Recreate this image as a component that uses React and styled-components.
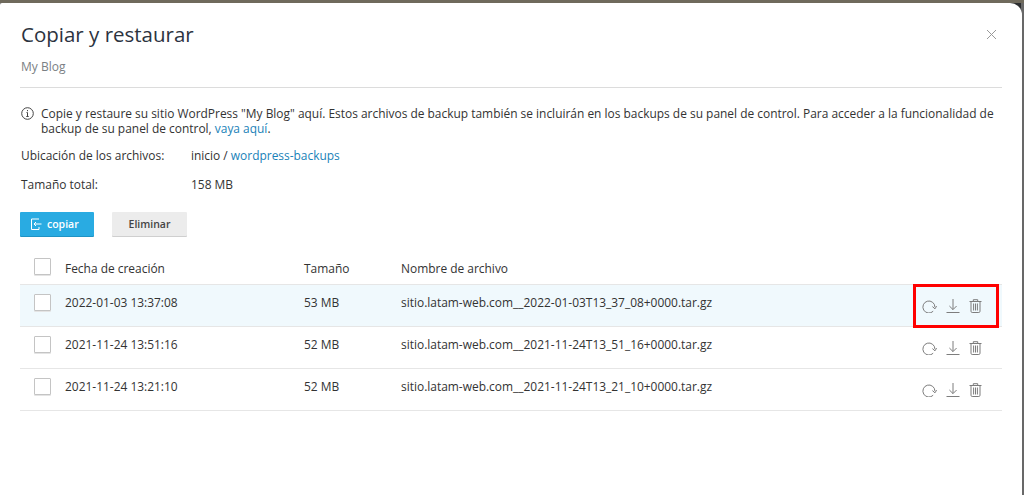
import React from "react";
import styled, { createGlobalStyle } from "styled-components";

const Global = createGlobalStyle`
  html, body { margin: 0; height: 100%; background: #666; overflow: hidden; }
  #root { height: 100%; }
  * { box-sizing: border-box; }
`;
const Backdrop = styled.div`
  height: 495px; padding: 3px 2.5px 0 0;
  background:
    linear-gradient(#2c2e30, #2c2e30) right 3px top 3px / 14px 14px no-repeat,
    linear-gradient(180deg, #6f6a5c 3px, #686868 3px);
`;
const Modal = styled.div`
  height: 492px; background: #fff; border-radius: 2px 12px 0 0;
  padding: 0 20px; font-family: "Open Sans", sans-serif; color: #333;
  font-size: 11.95px; position: relative;
`;
const Header = styled.header`
  height: 85px; padding-top: 17px; padding-left: 1px; border-bottom: 1px solid #dcdcdc;
`;
const Title = styled.h1`
  margin: 0; font-size: 20.5px; font-weight: 400; line-height: 28px; color: #2c3340;
`;
const Sub = styled.div`
  margin-top: 11px; font-size: 12px; line-height: 16px; color: #7b7f84;
`;
const Close = styled.button`
  position: absolute; top: 25px; right: 24px; width: 13px; height: 13px; padding: 0;
  border: 0; background: none; display: flex; color: #999;
`;
const Info = styled.div`
  display: flex; gap: 7px; margin-top: 18px; padding-left: 1px; line-height: 15px;
`;
const InfoIcon = styled.svg`
  flex: none; width: 13px; height: 13px; margin-top: 1px; color: #444;
`;
const Link = styled.a`
  color: #1a82b8; text-decoration: none;
`;
const Field = styled.div`
  display: grid; grid-template-columns: 170px 1fr; padding-left: 1px; line-height: 16px; margin-top: ${p => p.$gap}px;
`;
const Buttons = styled.div`
  display: flex; gap: 18px; margin-top: 19px;
`;
const Button = styled.button`
  height: 24px; border: 0; border-radius: 1px; display: flex; align-items: center; gap: 5px;
  justify-content: ${p => p.$primary ? "flex-start" : "center"};
  padding: 0 0 0 ${p => p.$primary ? 11 : 0}px;
  width: ${p => p.$w}px; font: 600 10.5px "Open Sans", sans-serif;
  background: ${p => p.$primary ? "#29abe2" : "#ececec"};
  color: ${p => p.$primary ? "#fff" : "#444"};
  box-shadow: 0 1px 0 ${p => p.$primary ? "#1f93c4" : "#cfcfcf"};
`;
const Table = styled.div`
  margin-top: 16px;
`;
const Row = styled.div`
  display: grid; grid-template-columns: 31px 239px 97px 1fr 89px; align-items: center; padding-left: 14px;
  height: ${p => p.$head ? 33 : 42}px;
  padding-bottom: ${p => p.$head ? 0 : 7}px;
  background: ${p => p.$active ? "#f0f9fd" : "#fff"};
  border-bottom: 1px solid #e6e6e6;
`;
const Check = styled.span`
  width: 17px; height: 17px; border: 1px solid #c4c4c4; border-radius: 1px; background: #fff;
  box-shadow: 0 1px 0 #e4e4e4; display: block; margin-top: ${p => p.$head ? -3 : 1}px;
`;
const Actions = styled.div`
  display: flex; align-items: flex-start; gap: 9px; align-self: stretch;
  margin: 0 3px -7px 0; padding: 14px 0 0 9px; color: #7d7d7d; position: relative;
`;
const Highlight = styled.div`
  position: absolute; inset: -1px 0 -2px 0; border: 3px solid #f00; pointer-events: none;
`;

const Refresh = () => (
  <svg width="15" height="14" viewBox="0 0 15 14" fill="none" stroke="currentColor" strokeWidth="1">
    <path d="M11.2 12.2A6 6 0 1 1 12.9 8" />
    <path d="M10.4 7.6l2.6 2.2 1.6-2.7" />
  </svg>
);
const Download = () => (
  <svg width="14" height="15" viewBox="0 0 14 15" fill="none" stroke="currentColor" strokeWidth="1">
    <path d="M7 0v10.5M3.4 7l3.6 3.6L10.6 7M.5 13.5h13" />
  </svg>
);
const Trash = () => (
  <svg width="13" height="14" viewBox="0 0 13 14" fill="none" stroke="currentColor" strokeWidth="1">
    <path d="M.5 2.5h12M4.3 2.5V.7h4.4v1.8M2 2.5v9.8c0 .8.5 1.2 1.2 1.2h6.6c.7 0 1.2-.4 1.2-1.2V2.5M4.6 4.5v7M6.5 4.5v7M8.4 4.5v7" />
  </svg>
);

const rows = [
  ["2022-01-03 13:37:08", "53 MB", "sitio.latam-web.com__2022-01-03T13_37_08+0000.tar.gz", true],
  ["2021-11-24 13:51:16", "52 MB", "sitio.latam-web.com__2021-11-24T13_51_16+0000.tar.gz", false],
  ["2021-11-24 13:21:10", "52 MB", "sitio.latam-web.com__2021-11-24T13_21_10+0000.tar.gz", false],
];

export default function App() {
  return (
    <>
      <Global />
      <Backdrop>
        <Modal>
          <Header>
            <Title>Copiar y restaurar</Title>
            <Sub>My Blog</Sub>
          </Header>
          <Close aria-label="Cerrar">
            <svg width="13" height="13" viewBox="0 0 13 13" stroke="currentColor" strokeWidth="1">
              <path d="M2 2l9 9M11 2l-9 9" />
            </svg>
          </Close>
          <Info>
            <InfoIcon viewBox="0 0 13 13" fill="none" stroke="currentColor">
              <circle cx="6.5" cy="6.5" r="5.8" />
              <path d="M6.5 5.5v4M5.3 9.5h2.4M5.5 5.5h1M6.5 3v1.2" />
            </InfoIcon>
            <div>
              Copie y restaure su sitio WordPress "My Blog" aquí. Estos archivos de backup también se incluirán en los backups de su panel de control. Para acceder a la funcionalidad de backup de su panel de control, <Link href="#">vaya aquí</Link>.
            </div>
          </Info>
          <Field $gap={12}>
            <span>Ubicación de los archivos:</span>
            <span>inicio / <Link href="#">wordpress-backups</Link></span>
          </Field>
          <Field $gap={13}>
            <span>Tamaño total:</span>
            <span>158 MB</span>
          </Field>
          <Buttons>
            <Button $primary $w={74}>
              <svg width="11" height="12" viewBox="0 0 11 12" fill="none" stroke="currentColor" strokeWidth="1">
                <path d="M8 1H.5v10.5H8V9M3 6h7.5M5 4L3 6l2 2" />
              </svg>
              copiar
            </Button>
            <Button $w={75}>Eliminar</Button>
          </Buttons>
          <Table>
            <Row $head>
              <Check $head />
              <span>Fecha de creación</span>
              <span>Tamaño</span>
              <span>Nombre de archivo</span>
              <span />
            </Row>
            {rows.map(([date, size, name, active]) => (
              <Row key={name} $active={active}>
                <Check />
                <span>{date}</span>
                <span>{size}</span>
                <span>{name}</span>
                <Actions>
                  {active && <Highlight />}
                  <Refresh />
                  <Download />
                  <Trash />
                </Actions>
              </Row>
            ))}
          </Table>
        </Modal>
      </Backdrop>
    </>
  );
}
